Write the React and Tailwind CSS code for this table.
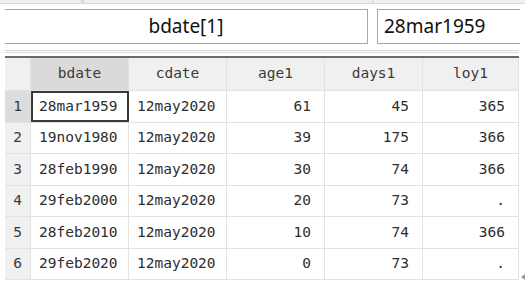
const cols = ["bdate", "cdate", "age1", "days1", "loy1"];

const rows = [
  ["28mar1959", "12may2020", "61", "45", "365"],
  ["19nov1980", "12may2020", "39", "175", "366"],
  ["28feb1990", "12may2020", "30", "74", "366"],
  ["29feb2000", "12may2020", "20", "73", "."],
  ["28feb2010", "12may2020", "10", "74", "366"],
  ["29feb2020", "12may2020", "0", "73", "."],
];

const heights = ["h-[32px]", "h-[31px]"];
const widths = ["w-[98px]", "w-[98px]", "w-[98px]", "w-[98px]", "w-[96px]"];

export default function App() {
  return (
    <div className="w-[525px] h-[285px] bg-white overflow-hidden relative">
      {/* toolbar edge */}
      <div className="flex h-[4px] bg-[#f0f0f0] border-b border-[#d9d9d9]">
        <div className="w-[82px] border-r border-[#d0d0d0]" />
        <div className="w-[2px] border-r border-[#d0d0d0]" />
        <div className="w-[289px] border-r border-[#d0d0d0]" />
      </div>

      {/* variable / value boxes */}
      <div className="flex ml-[5px] mr-[5px] mt-[5px] h-[35px] gap-[9px]">
        <div className="w-[363px] border-y border-r border-[#a8a8a8] flex items-center justify-center text-[19px] text-[#111] font-['Noto_Sans',sans-serif]">
          bdate[1]
        </div>
        <div className="flex-1 border-y border-l border-[#a8a8a8] flex items-center pl-[6px] text-[19px] text-[#111] font-['Noto_Sans',sans-serif]">
          28mar1959
        </div>
      </div>

      <div className="ml-[5px] mr-[6px] mt-[6px] h-[3px] border-y border-[#d6d6d6]" />

      {/* data grid */}
      <div className="ml-[5px] mr-[6px] mt-[3px] border-t-2 border-[#6b6b6b] font-['DejaVu_Sans_Mono',monospace] text-[14.5px] text-[#2e2e2e]">
        <div className="flex h-[33px] bg-[#f0f0f0] border-b border-[#e2e2e2]">
          <div className="w-[26px] border-r border-[#e2e2e2]" />
          {cols.map((c, i) => (
            <div
              key={c}
              className={`${widths[i]} flex items-center justify-center border-r border-[#e2e2e2] text-[#3a3a3a] ${
                i === 0 ? "bg-[#dadada]" : ""
              }`}
            >
              {c}
            </div>
          ))}
        </div>
        {rows.map((r, ri) => (
          <div key={ri} className={`flex ${heights[ri % 2]} border-b border-[#e2e2e2]`}>
            <div
              className={`w-[26px] flex items-center justify-center border-r border-[#e2e2e2] text-[#3a3a3a] ${
                ri === 0 ? "bg-[#dcdcdc]" : "bg-[#f0f0f0]"
              }`}
            >
              {ri + 1}
            </div>
            {r.map((v, ci) => (
              <div
                key={ci}
                className={`${widths[ci]} flex items-center border-r border-[#e2e2e2] ${
                  ci < 2 ? "pl-[8px]" : "justify-end pr-[13px]"
                } ${ri === 0 && ci === 0 ? "outline-2 outline-[#3a3a3a] -outline-offset-2" : ""}`}
              >
                {v}
              </div>
            ))}
          </div>
        ))}
      </div>

      <div className="absolute right-[0px] bottom-[5px] w-0 h-0 border-y-[3px] border-y-transparent border-r-[4px] border-r-[#9a9a9a]" />
    </div>
  );
}
